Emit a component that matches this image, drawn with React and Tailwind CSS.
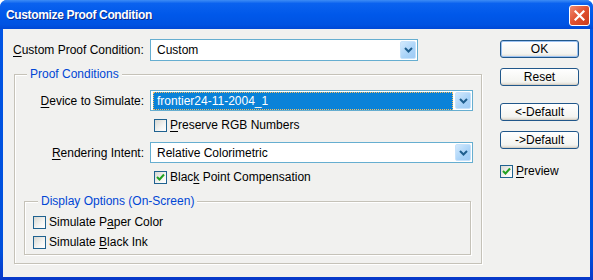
import React from "react";

function Chevron() {
  return (
    <svg width="9" height="6" viewBox="0 0 9 6">
      <path d="M1 1 L4.5 4.5 L8 1" fill="none" stroke="#1f5e8e" strokeWidth="2" />
    </svg>
  );
}

function DropBtn({ h }) {
  return (
    <div
      className={`w-[16px] ${h} rounded-[2px] border border-[#c6e2fb] bg-[linear-gradient(135deg,#d2e9fd,#a9d3f8_60%,#9fcbf5)] flex items-center justify-center`}
    >
      <Chevron />
    </div>
  );
}

function Combo({ w, h, bh, children, selected }) {
  return (
    <div className={`${w} ${h} border border-[#66aed0] bg-white flex items-center p-[1px]`}>
      <div className="flex-1 h-full flex items-center">
        {selected ? (
          <div className="ml-[1px] mr-[2px] flex-1 h-[18px] bg-[#0a82d8] border border-dotted border-[#f5c060] flex items-center pl-[3px] text-white">
            {children}
          </div>
        ) : (
          <span className="pl-[5px]">{children}</span>
        )}
      </div>
      <DropBtn h={bh} />
    </div>
  );
}

function Check({ checked }) {
  return (
    <div className="w-[13px] h-[13px] border border-[#1f6290] bg-[linear-gradient(135deg,#d8d8d2,#f4f4f2_60%,#ffffff)] flex items-center justify-center shrink-0">
      {checked && (
        <svg width="9" height="9" viewBox="0 0 9 9">
          <path d="M1 4 L3.5 6.5 L8 1.5" fill="none" stroke="#21a121" strokeWidth="2" />
        </svg>
      )}
    </div>
  );
}

function CheckRow({ checked, children, className = "" }) {
  return (
    <div className={`flex items-center h-[13px] ${className}`}>
      <Check checked={checked} />
      <span className="ml-[3px] leading-[13px]">{children}</span>
    </div>
  );
}

function Btn({ children, def }) {
  return (
    <div
      className={`w-[79px] h-[18px] rounded-[3px] border border-[#21578a] flex items-center justify-center text-black bg-[linear-gradient(to_bottom,#ffffff,#f4f4f0_80%,#dcd8ce)] ${
        def ? "shadow-[inset_0_0_0_1px_#9cc2f2]" : "shadow-[inset_0_-1px_0_#d6d0c5]"
      }`}
    >
      {children}
    </div>
  );
}

const U = ({ children }) => <span className="underline underline-offset-[2px]">{children}</span>;

export default function App() {
  return (
    <div className="w-[593px] h-[280px] bg-white font-['Liberation_Sans',Arial,sans-serif] text-[12px] text-black">
      <div className="w-full h-full rounded-t-[7px] bg-[linear-gradient(to_bottom,#0055e5,#0050dc_90%,#0838c8)] flex flex-col overflow-hidden">
        <div className="h-[29px] shrink-0 flex items-center pl-[6px] pr-[3px] bg-[linear-gradient(to_bottom,#3d8cf5_0%,#0a62ef_12%,#0058ea_50%,#0053e2_85%,#0048d6_100%)]">
          <span className="flex-1 text-white font-bold text-[12px] tracking-[-0.35px] [text-shadow:1px_1px_0_#0a2a8a]">
            Customize Proof Condition
          </span>
          <div className="w-[21px] h-[21px] mt-[1px] rounded-[3px] border border-white bg-[linear-gradient(135deg,#f08a72,#e0502f_50%,#c93c1c)] flex items-center justify-center">
            <svg width="11" height="11" viewBox="0 0 11 11">
              <path d="M1.5 1.5 L9.5 9.5 M9.5 1.5 L1.5 9.5" stroke="white" strokeWidth="2.2" strokeLinecap="square" />
            </svg>
          </div>
        </div>

        <div className="flex-1 mx-[3px] mb-[3px] bg-[#f1f1ef] flex">
          {/* left column */}
          <div className="w-[490px] pl-[10px] pt-[10px] flex flex-col">
            <div className="flex items-center h-[22px]">
              <span className="w-[137px]">
                <U>C</U>ustom Proof Condition:
              </span>
              <Combo w="w-[268px]" h="h-[22px]" bh="h-[18px]">
                Custom
              </Combo>
            </div>

            <fieldset className="ml-[1px] mt-[6px] w-[468px] border border-[#c5c2b8] shadow-[inset_1px_1px_0_#fff,1px_1px_0_#fff]">
              <legend className="ml-[12px] px-[3px] leading-[14px] text-[#0046d5] bg-[#f1f1ef]">Proof Conditions</legend>
              <div className="flex flex-col pb-[8px]">
                <div className="mt-[9px] flex items-center h-[21px]">
                  <span className="w-[129px] text-right">
                    <U>D</U>evice to Simulate:
                  </span>
                  <div className="ml-[6px]">
                    <Combo w="w-[323px]" h="h-[21px]" bh="h-[17px]" selected>
                      frontier24-11-2004_1
                    </Combo>
                  </div>
                </div>
                <CheckRow className="mt-[8px] ml-[139px]">
                  <U>P</U>reserve RGB Numbers
                </CheckRow>
                <div className="mt-[10px] flex items-center h-[21px]">
                  <span className="w-[129px] text-right">
                    <U>R</U>endering Intent:
                  </span>
                  <div className="ml-[6px]">
                    <Combo w="w-[323px]" h="h-[21px]" bh="h-[17px]">
                      Relative Colorimetric
                    </Combo>
                  </div>
                </div>
                <CheckRow checked className="mt-[8px] ml-[139px]">
                  Blac<U>k</U> Point Compensation
                </CheckRow>

                <fieldset className="ml-[9px] mt-[10px] w-[447px] border border-[#c5c2b8] shadow-[inset_1px_1px_0_#fff,1px_1px_0_#fff]">
                  <legend className="ml-[13px] px-[3px] leading-[14px] text-[#0046d5] bg-[#f1f1ef]">
                    Display Options (On-Screen)
                  </legend>
                  <div className="flex flex-col pl-[8px] pb-[5px]">
                    <CheckRow className="mt-[8px]">
                      Simulate P<U>a</U>per Color
                    </CheckRow>
                    <CheckRow className="mt-[7px]">
                      Simulate <U>B</U>lack Ink
                    </CheckRow>
                  </div>
                </fieldset>
              </div>
            </fieldset>
          </div>

          {/* right column */}
          <div className="ml-[7px] pt-[11px] flex flex-col">
            <Btn def>OK</Btn>
            <div className="mt-[10px]">
              <Btn>Reset</Btn>
            </div>
            <div className="mt-[17px]">
              <Btn>&lt;-Default</Btn>
            </div>
            <div className="mt-[10px]">
              <Btn>-&gt;Default</Btn>
            </div>
            <CheckRow checked className="mt-[16px]">
              <U>P</U>review
            </CheckRow>
          </div>
        </div>
      </div>
    </div>
  );
}
